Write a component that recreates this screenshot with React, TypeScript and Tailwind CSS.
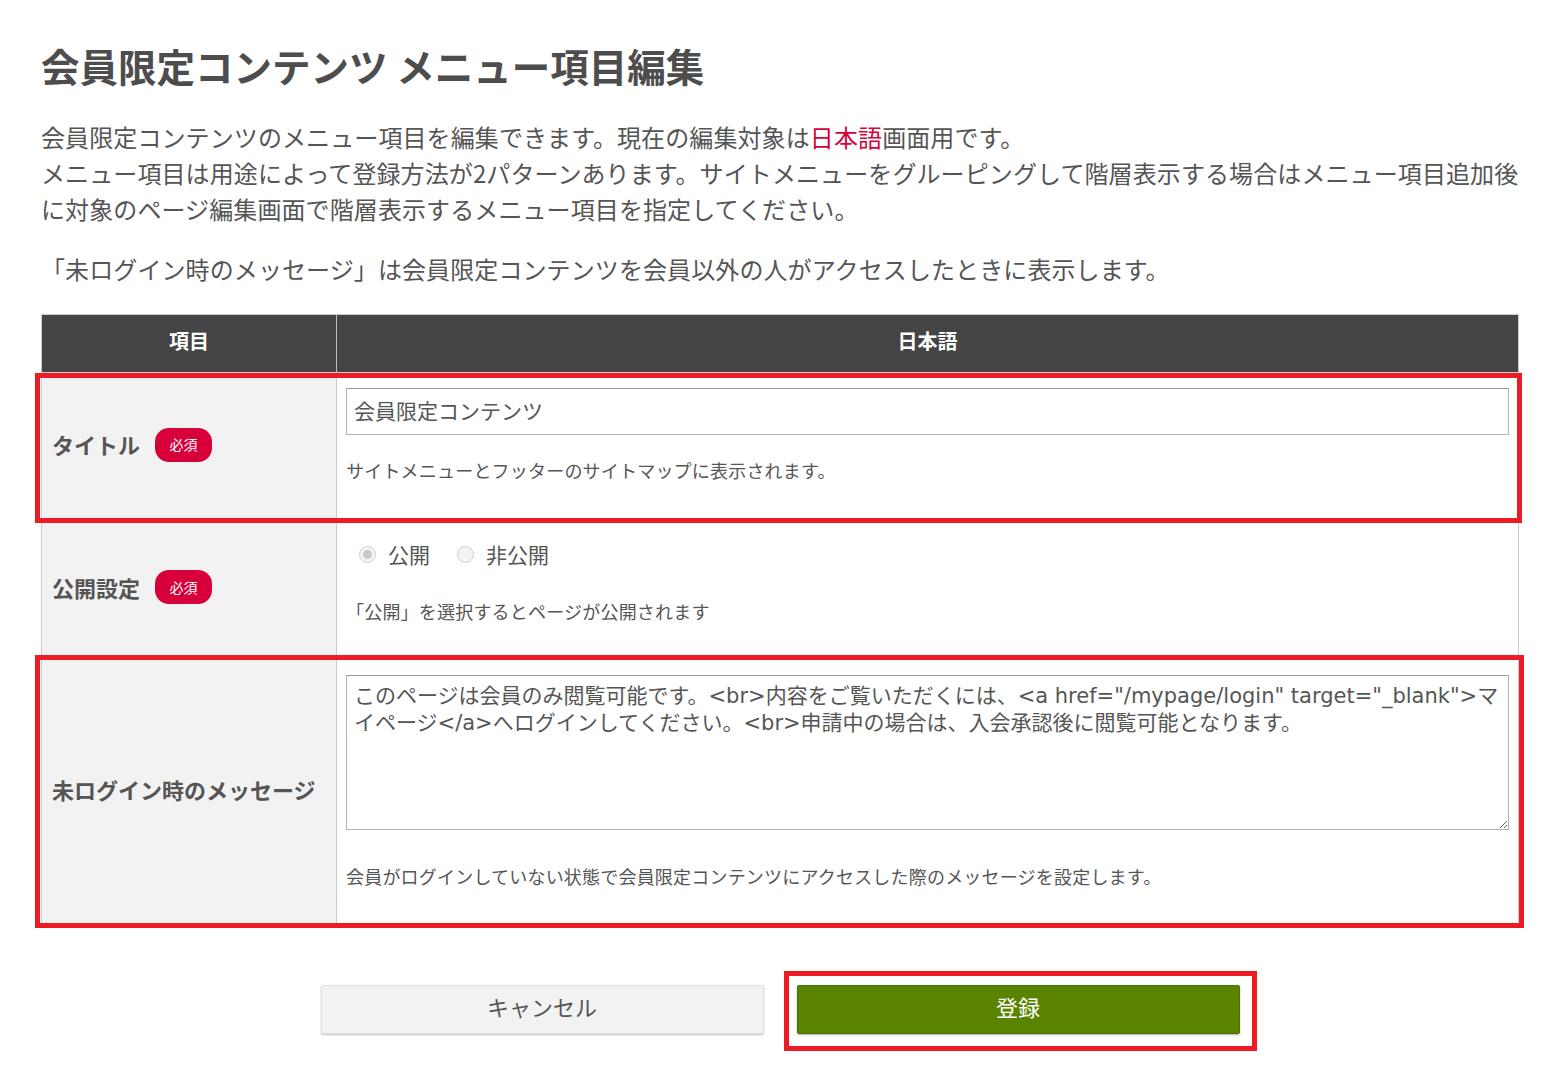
import { useState } from 'react';

const FONT = '"Noto Sans CJK JP", "Noto Sans", sans-serif';
const FIELD_FONT = '"DejaVu Sans", "Noto Sans CJK JP", sans-serif';

const MESSAGE =
  'このページは会員のみ閲覧可能です。<br>内容をご覧いただくには、<a href="/mypage/login" target="_blank">マイページ</a>へログインしてください。<br>申請中の場合は、入会承認後に閲覧可能となります。';

function Required() {
  return (
    <span className="ml-[15px] inline-flex h-[34px] w-[57px] items-center justify-center rounded-[14px] bg-[#d7003a] text-[14px] font-normal text-white">
      必須
    </span>
  );
}

function Highlight({ className }: { className: string }) {
  return <div className={`pointer-events-none absolute border-[5px] border-[#ed1c24] ${className}`} />;
}

function Radio({ checked, label, onClick }: { checked: boolean; label: string; onClick: () => void }) {
  return (
    <button type="button" onClick={onClick} className="flex items-center gap-[12px]">
      <span className="flex h-[17px] w-[17px] items-center justify-center rounded-full border border-[#cfcfcf] bg-[#f4f4f4]">
        {checked && <span className="h-[9px] w-[9px] rounded-full bg-[#c8c8c8]" />}
      </span>
      <span className="text-[21px] leading-[30px] text-[#555]">{label}</span>
    </button>
  );
}

export default function App() {
  const [publish, setPublish] = useState(true);

  return (
    <div className="min-h-[1077px] bg-white px-[41px] pt-[40px] text-[#555]" style={{ fontFamily: FONT }}>
      <h1 className="text-[38.5px] font-bold leading-[50px] text-[#4d4d4d]">会員限定コンテンツ メニュー項目編集</h1>

      <p className="mt-[29px] text-[24px] leading-[36px] tracking-[0.1px]">
        会員限定コンテンツのメニュー項目を編集できます。現在の編集対象は
        <span className="text-[#d7003a]">日本語</span>
        画面用です。
        <br />
        メニュー項目は用途によって登録方法が2パターンあります。サイトメニューをグルーピングして階層表示する場合はメニュー項目追加後
        <br />
        に対象のページ編集画面で階層表示するメニュー項目を指定してください。
      </p>
      <p className="mt-[24px] text-[24px] leading-[36px] tracking-[0.1px]">
        「未ログイン時のメッセージ」は会員限定コンテンツを会員以外の人がアクセスしたときに表示します。
      </p>

      {/* form table */}
      <div className="mt-[27px] w-[1478px] border border-[#cccccc]">
        <div className="flex h-[57px] bg-[#444444] text-[20px] font-bold text-white">
          <div className="flex w-[295px] items-center justify-center border-r border-[#bdbdbd] pb-[5px]">項目</div>
          <div className="flex flex-1 items-center justify-center pb-[5px]">日本語</div>
        </div>

        <div className="relative flex border-t border-[#cccccc]">
          <div className="flex w-[295px] items-center border-r border-[#cccccc] bg-[#f2f2f2] pb-[4px] pl-[10px] text-[22px] font-bold">
            タイトル
            <Required />
          </div>
          <div className="flex-1 px-[9px] pb-[36px] pt-[15px]">
            <input
              defaultValue="会員限定コンテンツ"
              className="block h-[47px] w-full border border-[#b5b5b5] border-t-[#9a9a9a] px-[7px] pb-[3px] text-[21px] text-[#555] outline-none"
              style={{ fontFamily: FONT }}
            />
            <p className="mt-[22px] text-[18px] leading-[27px] tracking-[0.2px]">サイトメニューとフッターのサイトマップに表示されます。</p>
          </div>
          <Highlight className="-left-[7px] -right-[4px] top-0 -bottom-[3px]" />
        </div>

        <div className="flex border-t border-[#cccccc]">
          <div className="flex w-[295px] items-center border-r border-[#cccccc] bg-[#f2f2f2] pb-[4px] pl-[10px] text-[22px] font-bold">
            公開設定
            <Required />
          </div>
          <div className="flex-1 px-[9px] pb-[32px] pt-[18px]">
            <div className="flex items-center gap-[27px] pl-[13px]">
              <Radio checked={publish} label="公開" onClick={() => setPublish(true)} />
              <Radio checked={!publish} label="非公開" onClick={() => setPublish(false)} />
            </div>
            <p className="mt-[29px] text-[18px] leading-[27px] tracking-[0.2px]">「公開」を選択するとページが公開されます</p>
          </div>
        </div>

        <div className="relative flex border-t border-[#cccccc]">
          <div className="flex w-[295px] items-center border-r border-[#cccccc] bg-[#f2f2f2] pb-[4px] pl-[10px] text-[22px] font-bold">
            未ログイン時のメッセージ
          </div>
          <div className="flex-1 px-[9px] pb-[35px] pt-[17px]">
            <textarea
              defaultValue={MESSAGE}
              className="block h-[155px] w-full border border-[#b5b5b5] border-t-[#9a9a9a] px-[7px] py-[7px] text-[21px] leading-[27px] text-[#555] outline-none"
              style={{ fontFamily: FIELD_FONT }}
            />
            <p className="mt-[33px] text-[18px] leading-[27px] tracking-[0.2px]">
              会員がログインしていない状態で会員限定コンテンツにアクセスした際のメッセージを設定します。
            </p>
          </div>
          <Highlight className="-left-[7px] -right-[6px] -top-[3px] -bottom-[3px]" />
        </div>
      </div>

      {/* actions */}
      <div className="mt-[59px] flex w-[1478px] justify-center gap-[33px]">
        <button
          type="button"
          className="h-[49px] w-[443px] rounded-[2px] border border-[#e2e2e2] bg-[#f2f2f2] pb-[7px] text-[22px] text-[#555] shadow-[0_1px_2px_rgba(0,0,0,0.25)]"
        >
          キャンセル
        </button>
        <div className="relative">
          <button
            type="button"
            className="h-[49px] w-[443px] rounded-[2px] border border-[#4c7000] bg-[#5a8400] pb-[7px] text-[22px] text-white shadow-[0_1px_2px_rgba(0,0,0,0.3)]"
          >
            登録
          </button>
          <Highlight className="-left-[13px] -right-[17px] -top-[14px] -bottom-[17px]" />
        </div>
      </div>
    </div>
  );
}
